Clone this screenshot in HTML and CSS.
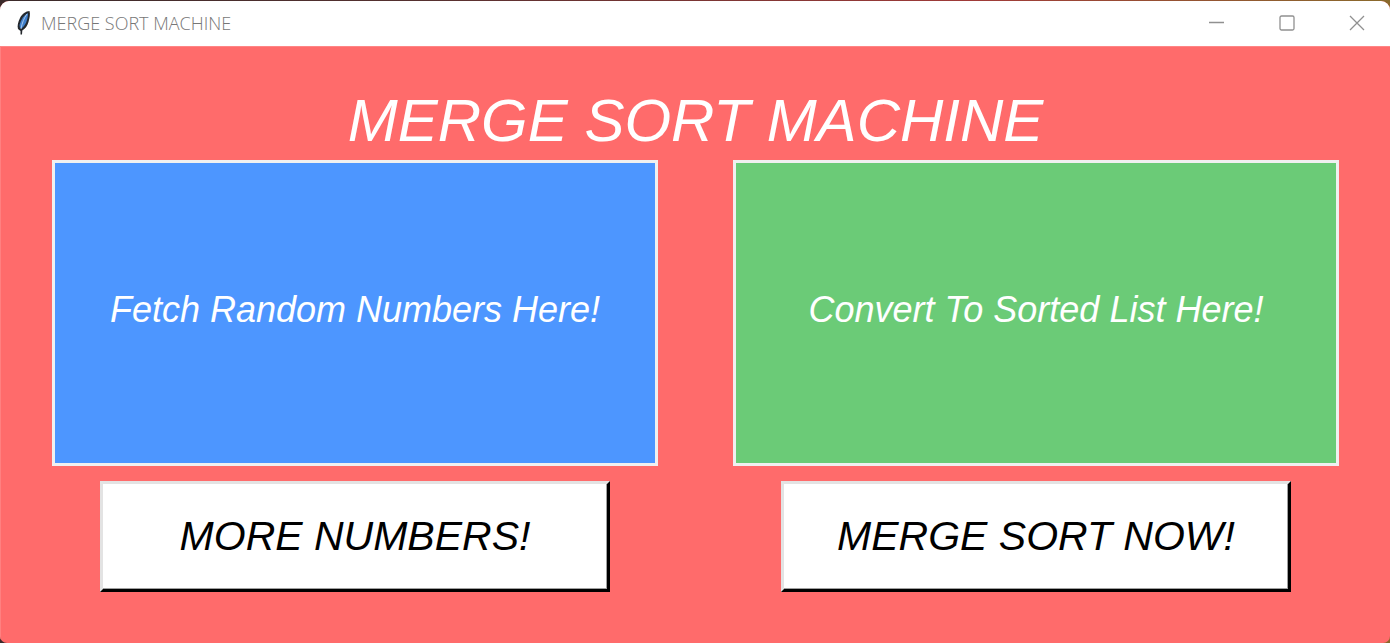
FILE: index.html
```html
<!DOCTYPE html>
<html lang="en">
<head>
<meta charset="utf-8">
<title>MERGE SORT MACHINE</title>
<link rel="stylesheet" href="styles.css">
</head>
<body>
<div class="window">
  <header class="titlebar">
    <svg class="feather" viewBox="0 0 16 26" aria-hidden="true">
      <path d="M13.500 1 C10 1 6 4 4 8 C2 12 1 16 2 19 L4.500 21 L4.500 24.500 L6 24.500 L6.300 20.500 C9 19 11.500 16 12.500 12 C13.500 8 14.500 4 13.500 1Z" fill="#24282d"/>
      <path d="M12 3 C8 5 5 9 3.500 15 L4 18 L6 18 C9 16 12 10 12 3Z" fill="#3f7fcb"/>
      <path d="M11 4 C8 8 6 13 5 19" stroke="#a9c8ec" stroke-width="1" fill="none"/>
    </svg>
    <span class="caption">MERGE SORT MACHINE</span>
    <div class="controls">
      <button class="control" type="button" aria-label="Minimize"><svg viewBox="0 0 16 16"><path d="M0 7.500H15"/></svg></button>
      <button class="control" type="button" aria-label="Maximize"><svg viewBox="0 0 16 16"><rect x="1" y="1" width="14" height="14" rx="1.500"/></svg></button>
      <button class="control" type="button" aria-label="Close"><svg viewBox="0 0 16 16"><path d="M1 1L15 15M15 1L1 15"/></svg></button>
    </div>
  </header>
  <main class="content">
    <h1 class="heading">MERGE SORT MACHINE</h1>
    <div class="columns">
      <section class="column">
        <p class="panel panel-blue">Fetch Random Numbers Here!</p>
        <button class="action" type="button">MORE NUMBERS!</button>
      </section>
      <section class="column">
        <p class="panel panel-green">Convert To Sorted List Here!</p>
        <button class="action" type="button">MERGE SORT NOW!</button>
      </section>
    </div>
  </main>
</div>
</body>
</html>
```
FILE: styles.css
```css
* { box-sizing: border-box; }

body {
  margin: 0;
  min-height: 100vh;
  padding-top: 1px;
  display: flex;
  flex-direction: column;
  background: linear-gradient(90deg, #3b2a2a, #55302f 30%, #a03a38 70%, #8a6a2c);
  font-family: "Liberation Sans", Arial, sans-serif;
}

.window {
  flex: 1;
  display: flex;
  flex-direction: column;
  border-radius: 9px 9px 7px 7px;
  overflow: hidden;
  background: #ff6b6b;
}

.titlebar {
  display: flex;
  align-items: center;
  height: 45px;
  padding-bottom: 2px;
  padding-left: 16px;
  background: #fff;
}

.feather { width: 16px; height: 26px; }

.caption {
  margin-left: 9px;
  font-family: "Open Sans", sans-serif;
  font-size: 18px;
  font-weight: 300;
  color: #777;
}

.controls { display: flex; margin-left: auto; margin-right: -2px; }

.control {
  width: 70px;
  height: 43px;
  padding: 0;
  border: 0;
  background: none;
  display: grid;
  place-items: center;
}

.control svg {
  width: 16px;
  height: 16px;
  fill: none;
  stroke: #909090;
  stroke-width: 1.300;
}

.content {
  flex: 1;
  padding: 37px 51px 50px;
  border-top: 1px solid #ff8585;
  border-left: 1px solid #ff8080;
}

.heading {
  margin: 0;
  padding-bottom: 2px;
  font-size: 60px;
  line-height: 74px;
  font-weight: 400;
  font-style: italic;
  color: #fff;
  text-align: center;
}

.columns {
  display: grid;
  grid-template-columns: 1fr 1fr;
  gap: 75px;
}

.column { display: flex; flex-direction: column; gap: 15px; }

.panel {
  display: grid;
  place-items: center;
  height: 306px;
  margin: 0;
  padding-bottom: 6px;
  border: 3px solid #f0f0f0;
  font-size: 36px;
  font-style: italic;
  color: #fff;
}

.panel-blue { background: #4d96ff; }
.panel-green { background: #6bcb77; }

.action {
  height: 111px;
  margin: 0 48px;
  padding: 0;
  border: 3px solid;
  border-color: #e3e3e3 #000 #000 #e3e3e3;
  background: #fff;
  box-shadow: inset -1px -1px #a0a0a0;
  font-family: inherit;
  font-size: 41px;
  font-style: italic;
  color: #000;
}
```
